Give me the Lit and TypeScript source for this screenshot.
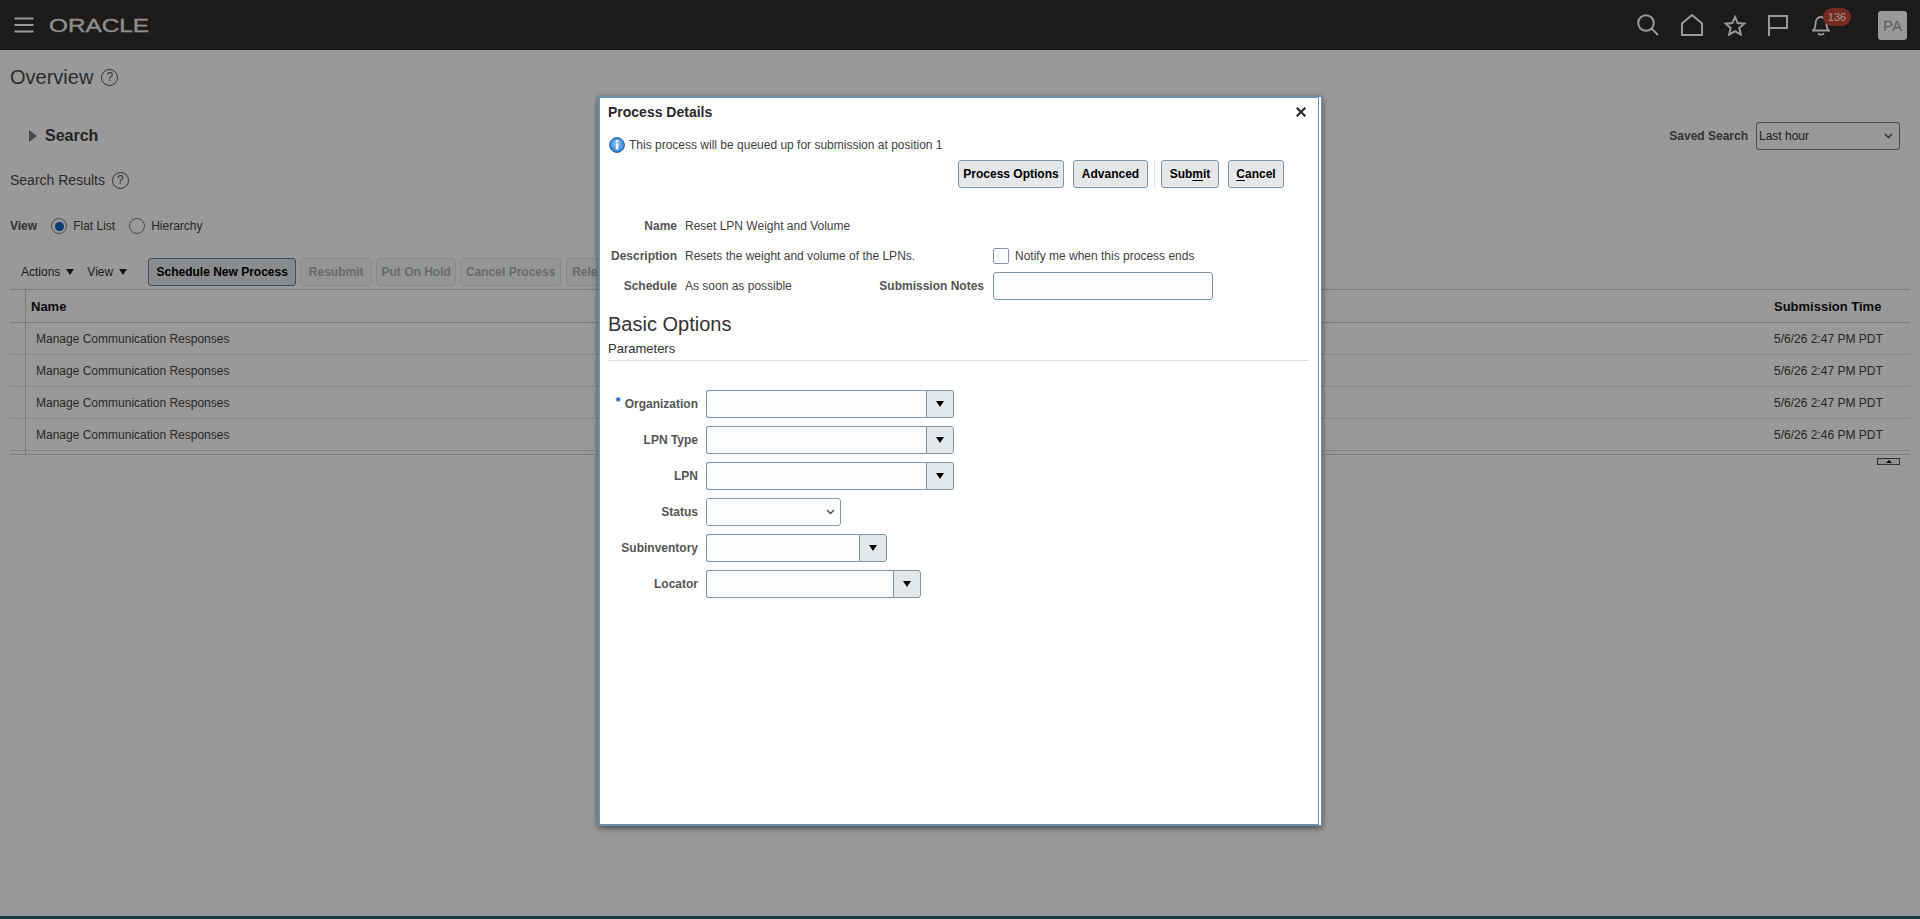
import { LitElement, css, html, svg } from "lit";
import { customElement } from "lit/decorators.js";

const rows = [
  "5/6/26 2:47 PM PDT",
  "5/6/26 2:47 PM PDT",
  "5/6/26 2:47 PM PDT",
  "5/6/26 2:46 PM PDT",
];

const params = [
  { label: "Organization", width: 248, required: true, kind: "combo" },
  { label: "LPN Type", width: 248, kind: "combo" },
  { label: "LPN", width: 248, kind: "combo" },
  { label: "Status", width: 135, kind: "select" },
  { label: "Subinventory", width: 181, kind: "combo" },
  { label: "Locator", width: 215, kind: "combo" },
];

const chevron = svg`<svg width="9" height="6" viewBox="0 0 9 6"><path d="M1 1l3.5 3.5L8 1" fill="none" stroke="#444" stroke-width="1.3"/></svg>`;

@customElement("app-root")
export class AppRoot extends LitElement {
  static styles = css`
    :host {
      display: block;
      position: relative;
      height: 919px;
      overflow: hidden;
      background: #fff;
      font-family: "Liberation Sans", Arial, sans-serif;
      font-size: 12px;
      color: #444;
    }
    .page {
      display: flex;
      flex-direction: column;
      height: 919px;
    }
    .topbar {
      display: flex;
      align-items: center;
      flex: none;
      height: 50px;
      background: #312d2a;
      padding-left: 14px;
    }
    .burger {
      display: block;
      margin-right: 15px;
    }
    .wordmark {
      display: block;
      overflow: visible;
    }
    .wordmark text {
      font-family: "Liberation Sans", sans-serif;
      font-size: 17.5px;
      fill: #eee;
      stroke: #eee;
      stroke-width: 0.3px;
    }
    .topicons {
      display: flex;
      align-items: center;
      margin-left: auto;
      padding-right: 13px;
    }
    .topicons svg {
      display: block;
    }
    .ic-search { margin-right: 22px; }
    .ic-home { margin-right: 21px; }
    .ic-star { margin-right: 22px; }
    .ic-flag { margin-right: 24px; }
    .bell {
      position: relative;
      width: 18px;
      height: 21px;
      margin-right: 48px;
    }
    .badge {
      position: absolute;
      left: 11px;
      top: -7px;
      width: 28px;
      height: 18px;
      border-radius: 9px;
      background: #c74634;
      color: #fff;
      font-size: 11px;
      line-height: 18px;
      text-align: center;
    }
    .avatar {
      width: 29px;
      height: 29px;
      border-radius: 3px;
      background: #fff;
      color: #999;
      font-size: 15px;
      line-height: 29px;
      text-align: center;
    }
    main {
      flex: 1;
      padding: 0 10px;
    }
    .title-row {
      display: flex;
      align-items: center;
      height: 30px;
      margin-top: 12px;
      font-size: 20px;
      color: #4a4a4a;
    }
    .help {
      flex: none;
      width: 15px;
      height: 15px;
      border: 1.2px solid #555;
      border-radius: 50%;
      margin-left: 8px;
      font-size: 12px;
      line-height: 15px;
      text-align: center;
      color: #555;
    }
    .search-row {
      display: flex;
      align-items: center;
      height: 28px;
      margin-top: 30px;
      padding-left: 19px;
    }
    .tri-right {
      width: 0;
      height: 0;
      border-left: 8px solid #7a7a7a;
      border-top: 6.5px solid transparent;
      border-bottom: 6.5px solid transparent;
      margin-right: 8px;
    }
    .search-title {
      font-size: 16px;
      font-weight: bold;
      color: #3c3c3c;
    }
    .saved {
      display: flex;
      align-items: center;
      margin-left: auto;
      margin-right: 10px;
    }
    .lbl {
      font-weight: bold;
      color: #555;
    }
    .saved .lbl {
      margin-right: 8px;
    }
    .saved-select {
      display: flex;
      align-items: center;
      justify-content: space-between;
      box-sizing: border-box;
      width: 144px;
      height: 28px;
      padding: 0 6px 0 2px;
      border: 1px solid #6f8296;
      border-radius: 3px;
      color: #333;
    }
    .results-row {
      display: flex;
      align-items: center;
      height: 20px;
      margin-top: 20px;
      font-size: 14px;
      color: #4a4a4a;
    }
    .results-row .help {
      margin-left: 7px;
    }
    .view-row {
      display: flex;
      align-items: center;
      height: 20px;
      margin-top: 26px;
    }
    .radio {
      box-sizing: border-box;
      display: flex;
      align-items: center;
      justify-content: center;
      width: 16px;
      height: 16px;
      border: 1px solid #6f8296;
      border-radius: 50%;
      background: #fff;
    }
    .radio.on::after {
      content: "";
      width: 9px;
      height: 9px;
      border-radius: 50%;
      background: #0a62c4;
    }
    .view-row .lbl { margin-right: 14px; }
    .view-row span.opt { margin: 0 14px 0 6px; }
    .toolbar {
      display: flex;
      align-items: center;
      height: 28px;
      margin-top: 22px;
      padding-left: 11px;
    }
    .menu {
      display: flex;
      align-items: center;
      color: #333;
    }
    .tri-down {
      width: 0;
      height: 0;
      border-top: 6px solid #222;
      border-left: 4.5px solid transparent;
      border-right: 4.5px solid transparent;
    }
    .menu .tri-down { margin-left: 6px; }
    .menu.actions { margin-right: 13px; }
    .menu.view { margin-right: 21px; }
    .tbtn {
      box-sizing: border-box;
      height: 28px;
      margin-right: 4px;
      padding: 0;
      border-radius: 3px;
      font: bold 12px "Liberation Sans", Arial, sans-serif;
    }
    .tbtn.main {
      width: 148px;
      background: #e4e8ea;
      border: 1px solid #6d8296;
      color: #000;
    }
    .tbtn.off {
      background: #f7f8f9;
      border: 1px solid #e0e5e8;
      color: #adb3b7;
    }
    .w-resubmit { width: 72px; }
    .w-hold { width: 80px; }
    .w-cancel { width: 101px; margin-right: 5px; }
    .tbtn.w-release {
      flex: none;
      width: 70px;
      padding-left: 5px;
      text-align: left;
    }
    .grid {
      border-top: 1px solid #c8d0d6;
      margin-top: 3px;
    }
    .row {
      display: grid;
      grid-template-columns: 16px 1fr 136px;
      align-items: stretch;
      height: 32px;
      box-sizing: border-box;
      border-bottom: 1px solid #dbe2e7;
    }
    .row.head {
      height: 33px;
      border-bottom-color: #c8d0d6;
      font-weight: bold;
      color: #111;
      font-size: 13px;
    }
    .row.filler {
      height: 4px;
      border-bottom-color: #c8d0d6;
    }
    .sel {
      border-right: 1px solid #c8d0d6;
    }
    .cell {
      display: flex;
      align-items: center;
      padding-left: 10px;
    }
    .head .cell { padding-left: 5px; }
    .cell.time, .head .cell.time { padding-left: 0; }
    .pager {
      display: flex;
      justify-content: flex-end;
      margin: 3px 10px 0 0;
    }
    .pager div {
      display: flex;
      align-items: center;
      justify-content: center;
      box-sizing: border-box;
      width: 23px;
      height: 7px;
      border: 1px solid #555;
      background: #f0f2f4;
    }
    .pager i {
      width: 0;
      height: 0;
      border-bottom: 3px solid #000;
      border-left: 3px solid transparent;
      border-right: 3px solid transparent;
    }
    .strip {
      flex: none;
      height: 3px;
      background: #21646a;
    }
    .scrim {
      position: absolute;
      inset: 0;
      background: rgba(0, 0, 0, 0.4);
    }
    .dialog {
      position: absolute;
      left: 598px;
      top: 96px;
      box-sizing: border-box;
      width: 724px;
      height: 730px;
      background: #fff;
      border: 2px solid #6f8ea8;
      border-right: 4px double #6f8ea8;
      box-shadow: 0 2px 6px rgba(0, 0, 0, 0.55);
      padding-left: 8px;
      color: #3f3f3f;
    }
    .dlg-title {
      display: flex;
      align-items: center;
      justify-content: space-between;
      height: 28px;
      padding-right: 12px;
      font-size: 14px;
      font-weight: bold;
      color: #2a2a2a;
    }
    .info {
      display: flex;
      align-items: center;
      gap: 4px;
      height: 16px;
      margin-top: 11px;
      padding-left: 1px;
    }
    .info svg { flex: none; }
    .dlg-btns {
      display: flex;
      justify-content: flex-end;
      align-items: center;
      margin-top: 7px;
      padding-right: 34px;
    }
    .btn {
      box-sizing: border-box;
      height: 28px;
      padding: 0;
      margin-left: 9px;
      border: 1px solid #7f97ab;
      border-radius: 3px;
      background: #e4e8ea;
      color: #000;
      font: bold 12px "Liberation Sans", Arial, sans-serif;
    }
    .w-options { width: 106px; }
    .w-advanced { width: 75px; }
    .w-submit { width: 58px; }
    .w-cancel-dlg { width: 56px; }
    .btn u { text-underline-offset: 2px; }
    .btn-sep {
      width: 1px;
      height: 28px;
      margin-left: 6px;
      margin-right: -3px;
      background: #dfe5ea;
    }
    .details {
      display: grid;
      grid-template-columns: 69px 192px 100px 220px;
      grid-auto-rows: 30px;
      column-gap: 8px;
      align-items: center;
      margin-top: 23px;
    }
    .details .lbl { justify-self: end; white-space: nowrap; }
    .details .lbl.pad { padding-right: 1px; }
    .span2 { grid-column: 2 / span 2; }
    .col4 { grid-column: 4; }
    .check {
      display: flex;
      align-items: center;
      gap: 6px;
    }
    .box {
      box-sizing: border-box;
      width: 16px;
      height: 16px;
      border: 1px solid #7f97ab;
      border-radius: 2px;
      background: #fbfdff;
    }
    .field {
      box-sizing: border-box;
      display: block;
      height: 28px;
      border: 1px solid #7f97ab;
      border-radius: 3px;
      background: #fbfdff;
      outline: none;
    }
    .notes { width: 220px; }
    h2 {
      margin: 11px 0 0;
      height: 24px;
      font-size: 20px;
      font-weight: normal;
      line-height: 24px;
      color: #333;
    }
    .params-head {
      width: 701px;
      height: 19px;
      margin-top: 5px;
      border-bottom: 1px solid #d6dfe6;
      font-size: 13px;
      line-height: 16px;
      color: #333;
    }
    .form {
      display: grid;
      grid-template-columns: 90px auto;
      grid-auto-rows: 28px;
      column-gap: 8px;
      row-gap: 8px;
      justify-content: start;
      align-items: center;
      margin-top: 29px;
    }
    .form .lbl {
      display: flex;
      justify-content: flex-end;
      align-items: center;
    }
    .req {
      margin-right: 4px;
      color: #0a62c4;
      font-size: 13px;
      transform: translateY(-3px);
    }
    .combo {
      display: flex;
      height: 28px;
    }
    .combo .field {
      flex: 1;
      min-width: 0;
      border-radius: 3px 0 0 3px;
      border-right: 0;
    }
    .combo button {
      display: flex;
      align-items: center;
      justify-content: center;
      flex: none;
      box-sizing: border-box;
      width: 28px;
      height: 28px;
      padding: 0;
      border: 1px solid #7f97ab;
      border-radius: 0 3px 3px 0;
      background: #e4e8ea;
    }
    .combo .tri-down { border-top-color: #000; border-left-width: 4px; border-right-width: 4px; }
    .select {
      display: flex;
      align-items: center;
      justify-content: flex-end;
      padding-right: 5px;
    }
  `;

  render() {
    return html`
      <div class="page">
        <header class="topbar">
          <svg class="burger" width="20" height="16" viewBox="0 0 20 16" fill="none" stroke="#fff" stroke-width="1.8">
            <path d="M.5 1.5h19M.5 8h19M.5 14.5h19" />
          </svg>
          <svg class="wordmark" width="101" height="20" viewBox="0 0 101 20">
            <text x="0" y="17" textLength="100" lengthAdjust="spacingAndGlyphs">ORACLE</text>
          </svg>
          <div class="topicons">
            <svg class="ic-search" width="22" height="22" viewBox="0 0 22 22" fill="none" stroke="#fff" stroke-width="2">
              <circle cx="9" cy="9" r="7.8" /><path d="M14.5 14.5l6.5 6.5" />
            </svg>
            <svg class="ic-home" width="22" height="22" viewBox="0 0 22 22" fill="none" stroke="#fff" stroke-width="2">
              <path d="M1 21V9.5L11 1l10 8.5V21z" />
            </svg>
            <svg class="ic-star" width="22" height="21" viewBox="0 0 22 21" fill="none" stroke="#fff" stroke-width="2">
              <path d="M11 2l2.7 6.1 6.6.6-5 4.4 1.5 6.5L11 16.2l-5.8 3.4 1.5-6.5-5-4.4 6.6-.6z" />
            </svg>
            <svg class="ic-flag" width="20" height="21" viewBox="0 0 20 21" fill="none" stroke="#fff" stroke-width="2">
              <path d="M1 21V1h18v12H1" />
            </svg>
            <div class="bell">
              <svg width="18" height="21" viewBox="0 0 18 21" fill="none" stroke="#fff" stroke-width="1.8">
                <path d="M1 15.5c2-1.5 2.5-3 2.5-6.5C3.5 5 5.5 2 9 2s5.5 3 5.5 7c0 3.5.5 5 2.5 6.5z" />
                <path d="M6 18.5c1.5 1.5 4.5 1.5 6 0" />
              </svg>
              <div class="badge">136</div>
            </div>
            <div class="avatar">PA</div>
          </div>
        </header>
        <main>
          <div class="title-row">Overview<span class="help">?</span></div>
          <div class="search-row">
            <div class="tri-right"></div>
            <div class="search-title">Search</div>
            <div class="saved">
              <span class="lbl">Saved Search</span>
              <div class="saved-select">Last hour ${chevron}</div>
            </div>
          </div>
          <div class="results-row">Search Results<span class="help">?</span></div>
          <div class="view-row">
            <span class="lbl">View</span>
            <div class="radio on"></div>
            <span class="opt">Flat List</span>
            <div class="radio"></div>
            <span class="opt">Hierarchy</span>
          </div>
          <div class="toolbar">
            <div class="menu actions">Actions<div class="tri-down"></div></div>
            <div class="menu view">View<div class="tri-down"></div></div>
            <button class="tbtn main">Schedule New Process</button>
            <button class="tbtn off w-resubmit">Resubmit</button>
            <button class="tbtn off w-hold">Put On Hold</button>
            <button class="tbtn off w-cancel">Cancel Process</button>
            <button class="tbtn off w-release">Release</button>
          </div>
          <div class="grid">
            <div class="row head">
              <div class="sel"></div>
              <div class="cell">Name</div>
              <div class="cell time">Submission Time</div>
            </div>
            ${rows.map(
              (time) => html`
                <div class="row">
                  <div class="sel"></div>
                  <div class="cell">Manage Communication Responses</div>
                  <div class="cell time">${time}</div>
                </div>
              `
            )}
            <div class="row filler"><div class="sel"></div></div>
          </div>
          <div class="pager"><div><i></i></div></div>
        </main>
        <div class="strip"></div>
      </div>

      <div class="scrim"></div>

      <section class="dialog">
        <div class="dlg-title">
          Process Details
          <svg width="10" height="10" viewBox="0 0 10 10" stroke="#222" stroke-width="2"><path d="M.7.7l8.6 8.6M9.3.7L.7 9.3" /></svg>
        </div>
        <div class="info">
          <svg width="16" height="16" viewBox="0 0 16 16">
            <defs>
              <radialGradient id="ib" cx="50%" cy="45%" r="55%">
                <stop offset="0" stop-color="#9fd0f5" />
                <stop offset="1" stop-color="#2a7bd0" />
              </radialGradient>
            </defs>
            <circle cx="8" cy="8" r="7.4" fill="url(#ib)" stroke="#1f66b3" />
            <circle cx="8" cy="4.3" r="1.3" fill="#fff" />
            <rect x="6.9" y="6.5" width="2.3" height="6" fill="#fff" />
          </svg>
          This process will be queued up for submission at position 1
        </div>
        <div class="dlg-btns">
          <button class="btn w-options">Process Options</button>
          <button class="btn w-advanced">Advanced</button>
          <div class="btn-sep"></div>
          <button class="btn w-submit">Sub<u>m</u>it</button>
          <button class="btn w-cancel-dlg"><u>C</u>ancel</button>
        </div>
        <div class="details">
          <div class="lbl">Name</div>
          <div class="span2">Reset LPN Weight and Volume</div>
          <div class="col4"></div>
          <div class="lbl">Description</div>
          <div class="span2">Resets the weight and volume of the LPNs.</div>
          <div class="col4 check"><div class="box"></div>Notify me when this process ends</div>
          <div class="lbl">Schedule</div>
          <div>As soon as possible</div>
          <div class="lbl pad">Submission Notes</div>
          <input class="field col4 notes" />
        </div>
        <h2>Basic Options</h2>
        <div class="params-head">Parameters</div>
        <div class="form">
          ${params.map(
            (p) => html`
              <div class="lbl">${p.required ? html`<span class="req">*</span>` : ""}${p.label}</div>
              ${p.kind === "combo"
                ? html`<div class="combo" style="width:${p.width}px">
                    <input class="field" />
                    <button><div class="tri-down"></div></button>
                  </div>`
                : html`<div class="field select" style="width:${p.width}px">${chevron}</div>`}
            `
          )}
        </div>
      </section>
    `;
  }
}
